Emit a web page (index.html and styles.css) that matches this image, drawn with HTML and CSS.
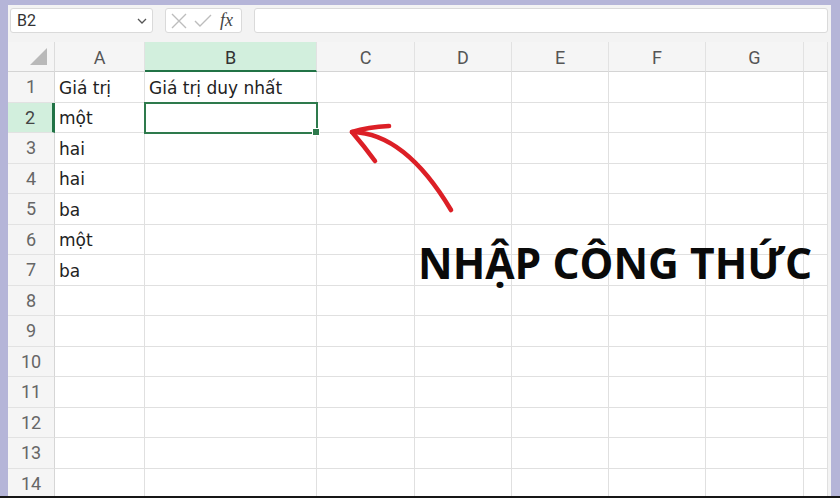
FILE: index.html
```html
<!DOCTYPE html>
<html lang="vi">
<head>
<meta charset="utf-8">
<title>Giá trị duy nhất</title>
<link rel="stylesheet" href="styles.css">
</head>
<body>
<div class="screen">
  <div class="frame">
    <div class="app">
      <div class="formula-bar">
        <div class="name-box">
          <span class="ref">B2</span>
          <svg class="chevron" width="10" height="6" viewBox="0 0 10 6"><path d="M1 1 L5 5 L9 1" fill="none" stroke="#555" stroke-width="1.3"/></svg>
        </div>
        <div class="fx-tools">
          <svg class="tool" width="18" height="18" viewBox="0 0 18 18"><path d="M2 2 L16 16 M16 2 L2 16" stroke="#bdbdbd" stroke-width="1.4" fill="none"/></svg>
          <svg class="tool" width="20" height="18" viewBox="0 0 20 18"><path d="M2 9 L7 14 L18 3" stroke="#bdbdbd" stroke-width="1.4" fill="none"/></svg>
          <span class="fx">fx</span>
        </div>
        <div class="formula-input"></div>
      </div>
      <div class="sheet">
        <div class="grid">
          <div class="corner"><span class="tri"></span></div>
          <div class="col-head">A</div>
          <div class="col-head sel">B</div>
          <div class="col-head">C</div>
          <div class="col-head">D</div>
          <div class="col-head">E</div>
          <div class="col-head">F</div>
          <div class="col-head">G</div>
          <div class="col-head"></div>

          <div class="row-head">1</div><div class="cell">Giá trị</div><div class="cell">Giá trị duy nhất</div><div class="cell"></div><div class="cell"></div><div class="cell"></div><div class="cell"></div><div class="cell"></div><div class="cell"></div>
          <div class="row-head sel">2</div><div class="cell">một</div><div class="cell active"></div><div class="cell"></div><div class="cell"></div><div class="cell"></div><div class="cell"></div><div class="cell"></div><div class="cell"></div>
          <div class="row-head">3</div><div class="cell">hai</div><div class="cell"></div><div class="cell"></div><div class="cell"></div><div class="cell"></div><div class="cell"></div><div class="cell"></div><div class="cell"></div>
          <div class="row-head">4</div><div class="cell">hai</div><div class="cell"></div><div class="cell"></div><div class="cell"></div><div class="cell"></div><div class="cell"></div><div class="cell"></div><div class="cell"></div>
          <div class="row-head">5</div><div class="cell">ba</div><div class="cell"></div><div class="cell"></div><div class="cell"></div><div class="cell"></div><div class="cell"></div><div class="cell"></div><div class="cell"></div>
          <div class="row-head">6</div><div class="cell">một</div><div class="cell"></div><div class="cell"></div><div class="cell"></div><div class="cell"></div><div class="cell"></div><div class="cell"></div><div class="cell"></div>
          <div class="row-head">7</div><div class="cell">ba</div><div class="cell"></div><div class="cell"></div><div class="cell"></div><div class="cell"></div><div class="cell"></div><div class="cell"></div><div class="cell"></div>
          <div class="row-head">8</div><div class="cell"></div><div class="cell"></div><div class="cell"></div><div class="cell"></div><div class="cell"></div><div class="cell"></div><div class="cell"></div><div class="cell"></div>
          <div class="row-head">9</div><div class="cell"></div><div class="cell"></div><div class="cell"></div><div class="cell"></div><div class="cell"></div><div class="cell"></div><div class="cell"></div><div class="cell"></div>
          <div class="row-head">10</div><div class="cell"></div><div class="cell"></div><div class="cell"></div><div class="cell"></div><div class="cell"></div><div class="cell"></div><div class="cell"></div><div class="cell"></div>
          <div class="row-head">11</div><div class="cell"></div><div class="cell"></div><div class="cell"></div><div class="cell"></div><div class="cell"></div><div class="cell"></div><div class="cell"></div><div class="cell"></div>
          <div class="row-head">12</div><div class="cell"></div><div class="cell"></div><div class="cell"></div><div class="cell"></div><div class="cell"></div><div class="cell"></div><div class="cell"></div><div class="cell"></div>
          <div class="row-head">13</div><div class="cell"></div><div class="cell"></div><div class="cell"></div><div class="cell"></div><div class="cell"></div><div class="cell"></div><div class="cell"></div><div class="cell"></div>
          <div class="row-head">14</div><div class="cell"></div><div class="cell"></div><div class="cell"></div><div class="cell"></div><div class="cell"></div><div class="cell"></div><div class="cell"></div><div class="cell"></div>
        </div>
      </div>
    </div>
  </div>

  <!-- hand-drawn pointer toward the active cell -->
  <svg class="arrow" width="840" height="500" viewBox="0 0 840 500">
    <g fill="none" stroke="#dc1f26" stroke-width="4.6" stroke-linecap="round" stroke-linejoin="round">
      <path d="M451 210 Q405 133 352 132"/>
      <path d="M389 126 Q368 127 352 132 Q364 146 375 161"/>
    </g>
  </svg>
  <div class="callout">NHẬP CÔNG THỨC</div>
</div>
</body>
</html>
```

FILE: styles.css
```css
* { box-sizing: border-box; }

html, body {
  margin: 0;
  padding: 0;
  background: #fff;
}

.screen {
  position: relative;
  width: 840px;
  height: 500px;
  overflow: hidden;
  background: #fff;
  font-family: Roboto, "Liberation Sans", Arial, sans-serif;
}

.frame {
  height: 498px;
  padding: 5px 9px 0 8px;
  background: #b5b5d8;
  border-bottom: 2px solid #161616;
}

.app {
  height: 100%;
  display: flex;
  flex-direction: column;
  background: #f3f3f3;
  overflow: hidden;
}

/* formula bar */
.formula-bar {
  height: 37px;
  flex: none;
  display: flex;
  align-items: flex-start;
  gap: 12px;
  padding: 3px 3px 0 2px;
}

.name-box {
  width: 143px;
  height: 25px;
  display: flex;
  align-items: center;
  justify-content: space-between;
  padding: 0 5px 0 6px;
  background: #fff;
  border: 1px solid #dadada;
  border-radius: 3px;
}

.ref {
  font-size: 16px;
  color: #333;
}

.fx-tools {
  width: 77px;
  height: 25px;
  display: flex;
  align-items: center;
  gap: 5px;
  padding-left: 4px;
  background: #fff;
  border: 1px solid #dadada;
  border-radius: 3px;
}

.fx {
  margin-left: 2px;
  font-family: "Liberation Serif", "DejaVu Serif", serif;
  font-style: italic;
  font-size: 18px;
  color: #444;
}

.formula-input {
  flex: 1;
  height: 25px;
  background: #fff;
  border: 1px solid #dadada;
  border-radius: 3px;
}

/* sheet grid */
.sheet {
  flex: 1;
  padding-right: 3px;
  overflow: hidden;
}

.grid {
  display: grid;
  grid-template-columns: 47px 90px 172px 98px 97px 97px 97px 98px 1fr;
  grid-template-rows: 30px repeat(14, 30.5px);
  background: #fff;
}

.corner {
  display: flex;
  align-items: flex-end;
  justify-content: flex-end;
  padding: 0 7px 6px 0;
  background: #f5f5f5;
  border-right: 1px solid #dcdcdc;
  border-bottom: 1px solid #d4d4d4;
}

.tri {
  width: 17px;
  height: 17px;
  background: #b9b9b9;
  clip-path: polygon(100% 0, 100% 100%, 0 100%);
}

.col-head {
  display: flex;
  align-items: center;
  justify-content: center;
  padding-top: 2px;
  font-size: 18px;
  color: #555;
  background: #f5f5f5;
  border-right: 1px solid #e2e2e2;
  border-bottom: 1px solid #d4d4d4;
}

.col-head.sel {
  background: #d2efdd;
  border-bottom: 2px solid #217346;
  color: #333;
}

.row-head {
  display: flex;
  align-items: center;
  justify-content: center;
  font-size: 18px;
  color: #666;
  background: #f5f5f5;
  border-right: 1px solid #d6d6d6;
  border-bottom: 1px solid #e2e2e2;
}

.row-head.sel {
  background: #d2efdd;
  border-right: 3px solid #217346;
  color: #444;
}

.cell {
  display: flex;
  align-items: center;
  padding: 2px 0 0 4px;
  font-family: "DejaVu Sans", Verdana, sans-serif;
  font-size: 17px;
  color: #222;
  white-space: nowrap;
  border-right: 1px solid #e0e0e0;
  border-bottom: 1px solid #e0e0e0;
}

.cell.active {
  position: relative;
  outline: 2px solid #2e7a4c;
  outline-offset: -1px;
}

.cell.active::after {
  content: "";
  position: absolute;
  right: -4px;
  bottom: -4px;
  width: 6px;
  height: 6px;
  background: #2e7a4c;
  border: 1px solid #fff;
}

/* overlays */
.arrow {
  position: absolute;
  left: 0;
  top: 0;
  pointer-events: none;
}

.callout {
  position: absolute;
  left: 418px;
  top: 241px;
  font-family: "Open Sans", "Noto Sans", sans-serif;
  font-weight: 700;
  font-size: 42.6px;
  line-height: 1;
  color: #0a0a0a;
  white-space: nowrap;
}
```
